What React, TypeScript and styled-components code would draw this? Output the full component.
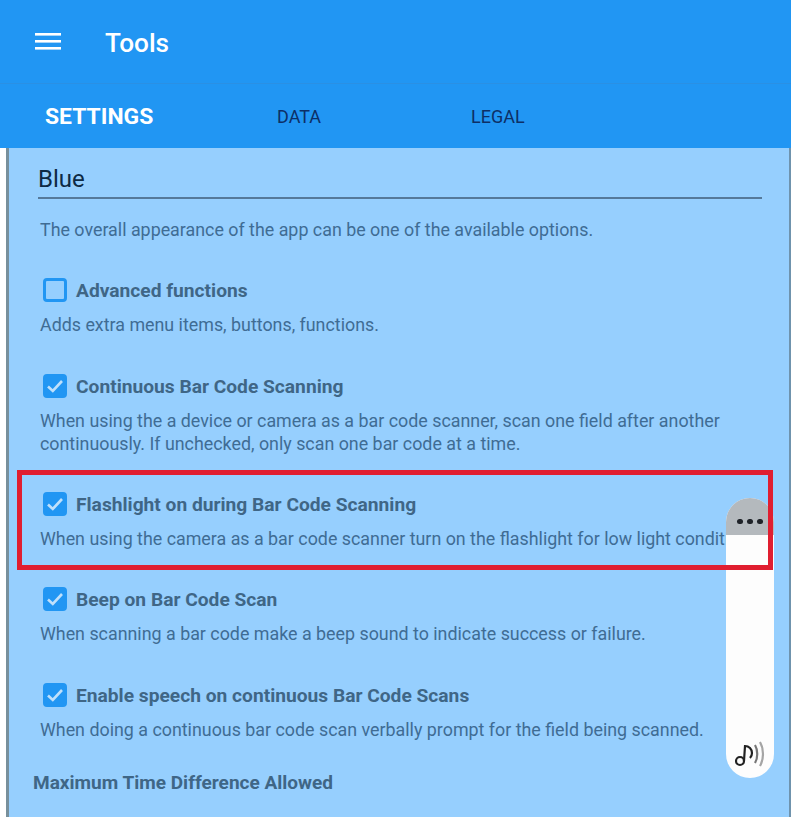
import React from "react";
import styled, { createGlobalStyle } from "styled-components";

const GlobalStyle = createGlobalStyle`
  html, body {
    margin: 0;
    padding: 0;
    background: #ffffff;
    font-family: Roboto, "Noto Sans", sans-serif;
  }
`;

const Page = styled.div`
  position: relative;
  width: 791px;
  height: 817px;
  overflow: hidden;
  display: flex;
  flex-direction: column;
`;

const TopBar = styled.header`
  height: 84px;
  flex: none;
  box-sizing: border-box;
  background: #2196f3;
  border-bottom: 1px solid #2a90e4;
  display: flex;
  align-items: center;
  padding-left: 35px;
  gap: 43px;
`;

const MenuIcon = styled.svg`
  width: 27px;
  height: 17px;
  display: block;
`;

const Title = styled.h1`
  margin: 2px 0 0;
  color: #ffffff;
  font-size: 26.2px;
  font-weight: 500;
`;

const Tabs = styled.nav`
  height: 64px;
  flex: none;
  background: #2196f3;
  display: flex;
  align-items: center;
  padding-left: 45px;
`;

const Tab = styled.div<{ $active?: boolean; $width: number }>`
  width: ${(p) => p.$width}px;
  color: ${(p) => (p.$active ? "#ffffff" : "#0d2f66")};
  font-size: ${(p) => (p.$active ? "22.9px" : "18px")};
  font-weight: ${(p) => (p.$active ? 700 : 400)};
`;

const Panel = styled.main`
  flex: 1;
  min-height: 0;
  margin-left: 6px;
  border-left: 3px solid #78909c;
  border-right: 2px solid #6f93ad;
  background: #96cffe;
  padding: 16px 27px 0 29px;
  overflow: hidden;
`;

const ThemeSelect = styled.div`
  color: #0d2a45;
  font-size: 24px;
  line-height: 31px;
  border-bottom: 2px solid #55799a;
  padding-bottom: 2px;
`;

const Note = styled.p<{ $nowrap?: boolean }>`
  margin: 0;
  padding-left: 2px;
  color: #3f6c94;
  font-size: 17.85px;
  line-height: 23px;
  white-space: ${(p) => (p.$nowrap ? "nowrap" : "normal")};
`;

const IntroNote = styled(Note)`
  margin-top: 19px;
`;

const Options = styled.div`
  display: flex;
  flex-direction: column;
`;

const Option = styled.section<{ $top: number }>`
  margin-top: ${(p) => p.$top}px;
`;

const OptionHead = styled.div`
  display: flex;
  align-items: center;
  gap: 9px;
  padding-left: 5px;
  height: 24px;
  margin-bottom: 11px;
`;

const Check = styled.span<{ $checked?: boolean }>`
  width: 24px;
  height: 24px;
  box-sizing: border-box;
  border-radius: 4px;
  border: 3px solid #2196f3;
  background: ${(p) => (p.$checked ? "#2196f3" : "transparent")};
  display: flex;
  align-items: center;
  justify-content: center;
`;

const OptionTitle = styled.span`
  color: #3f6686;
  font-size: 19.2px;
  font-weight: 700;
`;

const FieldLabel = styled.div`
  margin-top: 30px;
  margin-left: -5px;
  color: #3f6686;
  font-size: 19.05px;
  font-weight: 700;
`;

const Highlight = styled.div`
  position: absolute;
  left: 17px;
  top: 470px;
  width: 756px;
  height: 100px;
  box-sizing: border-box;
  border: 5px solid #e01e30;
  pointer-events: none;
`;

const Floating = styled.aside`
  position: absolute;
  left: 726px;
  top: 498px;
  width: 48px;
  height: 280px;
  border-radius: 24px;
  background: #fdfdfd;
  overflow: hidden;
  display: flex;
  flex-direction: column;
  justify-content: space-between;
`;

const Grip = styled.div`
  height: 37px;
  background: #b4b9bd;
  display: flex;
  align-items: flex-end;
  justify-content: center;
  gap: 4.5px;
  padding-bottom: 11px;
  box-sizing: border-box;
`;

const Dot = styled.span`
  width: 5.5px;
  height: 5.5px;
  border-radius: 50%;
  background: #1f2328;
`;

const SoundIcon = styled.svg`
  width: 32px;
  height: 32px;
  display: block;
  margin: 0 0 6px 8px;
`;

const Tick = () => (
  <svg width="18" height="14" viewBox="0 0 18 14" fill="none">
    <path d="M2 7.5 L6.8 12 L16 2" stroke="#bfe0fb" strokeWidth="2.6" />
  </svg>
);

const options = [
  { top: 37, title: "Advanced functions", checked: false, note: ["Adds extra menu items, buttons, functions."] },
  { top: 38, title: "Continuous Bar Code Scanning", checked: true, note: ["When using the a device or camera as a bar code scanner, scan one field after another", "continuously. If unchecked, only scan one bar code at a time."] },
  { top: 37, title: "Flashlight on during Bar Code Scanning", checked: true, note: ["When using the camera as a bar code scanner turn on the flashlight for low light conditions."] },
  { top: 37, title: "Beep on Bar Code Scan", checked: true, note: ["When scanning a bar code make a beep sound to indicate success or failure."] },
  { top: 38, title: "Enable speech on continuous Bar Code Scans", checked: true, note: ["When doing a continuous bar code scan verbally prompt for the field being scanned."] },
];

const App: React.FunctionComponent = () => (
  <>
    <GlobalStyle />
    <Page>
      <TopBar>
        <MenuIcon viewBox="0 0 27 17">
          <rect x="0" y="0" width="26" height="2.6" fill="#fff" />
          <rect x="0" y="7" width="26" height="2.6" fill="#fff" />
          <rect x="0" y="14" width="26" height="2.6" fill="#fff" />
        </MenuIcon>
        <Title>Tools</Title>
      </TopBar>
      <Tabs>
        <Tab $active $width={232}>SETTINGS</Tab>
        <Tab $width={194}>DATA</Tab>
        <Tab $width={100}>LEGAL</Tab>
      </Tabs>
      <Panel>
        <ThemeSelect>Blue</ThemeSelect>
        <IntroNote>The overall appearance of the app can be one of the available options.</IntroNote>
        <Options>
          {options.map((option) => (
            <Option $top={option.top} key={option.title}>
              <OptionHead>
                <Check $checked={option.checked}>{option.checked && <Tick />}</Check>
                <OptionTitle>{option.title}</OptionTitle>
              </OptionHead>
              {option.note.map((line) => (
                <Note $nowrap key={line}>{line}</Note>
              ))}
            </Option>
          ))}
        </Options>
        <FieldLabel>Maximum Time Difference Allowed</FieldLabel>
      </Panel>
      <Floating>
        <Grip>
          <Dot />
          <Dot />
          <Dot />
        </Grip>
        <SoundIcon viewBox="0 0 32 32" fill="none">
          <circle cx="6" cy="21" r="4" stroke="#222" strokeWidth="2.2" />
          <path d="M10 21L11 6c4 0 7 3 7 7c0 2-1 4-2 5" stroke="#222" strokeWidth="2.2" />
          <path d="M21 5c3 5 3 13 0 18" stroke="#777" strokeWidth="2.2" />
          <path d="M26 2c4 7 4 17 0 24" stroke="#a5a5a5" strokeWidth="2.2" />
        </SoundIcon>
      </Floating>
      <Highlight />
    </Page>
  </>
);

export default App;
